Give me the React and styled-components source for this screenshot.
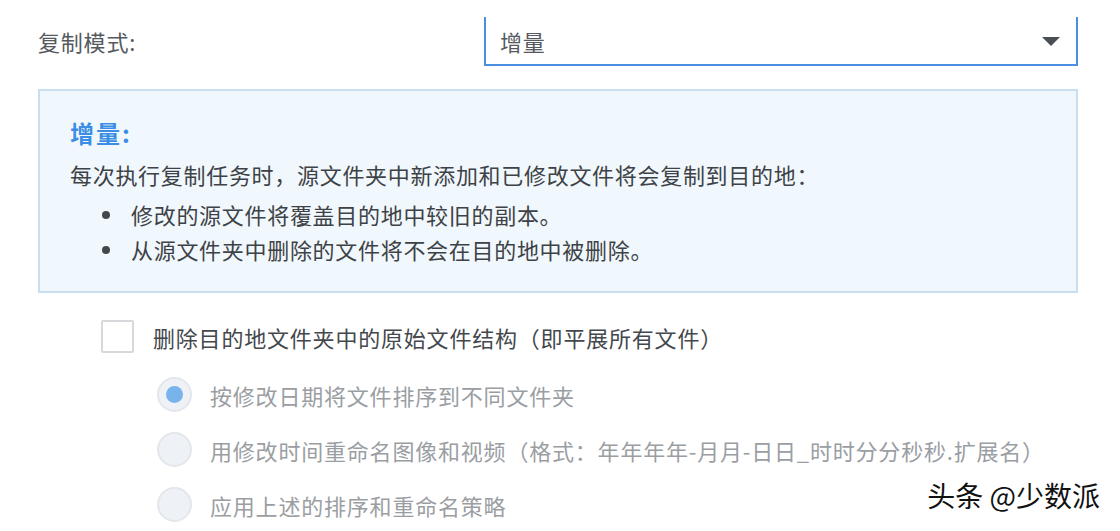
import React from "react";
import styled, { createGlobalStyle } from "styled-components";

const GlobalStyle = createGlobalStyle`
  html, body {
    margin: 0;
    padding: 0;
    background: #ffffff;
  }
  body {
    font-family: "Noto Sans CJK SC", "Noto Sans", sans-serif;
    width: 1120px;
    height: 531px;
    overflow: hidden;
  }
`;

const Page = styled.div`
  position: relative;
  width: 1120px;
  height: 531px;
  padding: 17px 42px 0 38px;
  box-sizing: border-box;
`;

const FormRow = styled.div`
  display: flex;
  align-items: center;
`;

const Label = styled.div`
  width: 446px;
  font-size: 22px;
  letter-spacing: 0.8px;
  color: #555a60;
  padding-bottom: 2px;
`;

const Select = styled.div`
  width: 594px;
  height: 49px;
  box-sizing: border-box;
  border: 2px solid #4a8fe0;
  border-top: none;
  display: flex;
  align-items: center;
  justify-content: space-between;
  padding: 0 16px 0 14px;
  font-size: 22px;
  letter-spacing: 0.8px;
  color: #555a60;
`;

const Caret = styled.span`
  width: 0;
  height: 0;
  border-left: 9px solid transparent;
  border-right: 9px solid transparent;
  border-top: 9px solid #4a4f56;
  margin-top: 2px;
`;

const InfoBox = styled.div`
  margin-top: 23px;
  width: 1040px;
  height: 204px;
  box-sizing: border-box;
  border: 2px solid #c8def1;
  background: #f1f8fd;
  padding: 24px 30px 0 30px;
  font-size: 22px;
  letter-spacing: 0.7px;
  color: #3e4246;
`;

const InfoTitle = styled.div`
  line-height: 35px;
  font-size: 24px;
  letter-spacing: 2px;
  font-weight: 700;
  color: #3b8ee3;
`;

const InfoText = styled.div`
  line-height: 35px;
  margin-top: 7px;
`;

const BulletList = styled.ul`
  list-style: none;
  margin: 5px 0 0 0;
  padding: 0;
`;

const Bullet = styled.li`
  position: relative;
  line-height: 35px;
  padding-left: 61px;
  &::before {
    content: "";
    position: absolute;
    left: 32px;
    top: 14px;
    width: 8px;
    height: 8px;
    border-radius: 50%;
    background: #44484c;
  }
`;

const OptionRow = styled.div`
  display: flex;
  align-items: center;
  height: 55px;
  margin-left: ${(p) => p.$indent}px;
  gap: ${(p) => p.$gap}px;
  font-size: 22px;
  letter-spacing: 0.8px;
  color: ${(p) => (p.$disabled ? "#9a9ea3" : "#44484d")};
`;

const CheckRow = styled(OptionRow)`
  margin-top: 16px;
  margin-bottom: 3px;
`;

const CheckBox = styled.span`
  width: 33px;
  height: 33px;
  box-sizing: border-box;
  border: 2px solid #d6d8db;
  border-radius: 2px;
  background: #fff;
`;

const Radio = styled.span`
  width: 35px;
  height: 35px;
  box-sizing: border-box;
  border-radius: 50%;
  border: 2px solid #e3e6ea;
  background: #eef1f5;
  display: flex;
  align-items: center;
  justify-content: center;
  &::after {
    content: "";
    display: ${(p) => (p.$checked ? "block" : "none")};
    width: 17px;
    height: 17px;
    border-radius: 50%;
    background: #78b3ec;
  }
`;

const Watermark = styled.div`
  position: absolute;
  right: 20px;
  bottom: 16px;
  font-size: 28px;
  font-weight: 400;
  color: #111;
  text-shadow: 1px 0 0 #fff, -1px 0 0 #fff, 0 1px 0 #fff, 0 -1px 0 #fff;
`;

const radios = [
  { label: "按修改日期将文件排序到不同文件夹", checked: true },
  {
    label: "用修改时间重命名图像和视频（格式：年年年年-月月-日日_时时分分秒秒.扩展名）",
    checked: false,
  },
  { label: "应用上述的排序和重命名策略", checked: false },
];

export default function App() {
  return (
    <>
      <GlobalStyle />
      <Page>
        <FormRow>
          <Label>复制模式:</Label>
          <Select>
            <span>增量</span>
            <Caret />
          </Select>
        </FormRow>
        <InfoBox>
          <InfoTitle>增量:</InfoTitle>
          <InfoText>每次执行复制任务时，源文件夹中新添加和已修改文件将会复制到目的地：</InfoText>
          <BulletList>
            <Bullet>修改的源文件将覆盖目的地中较旧的副本。</Bullet>
            <Bullet>从源文件夹中删除的文件将不会在目的地中被删除。</Bullet>
          </BulletList>
        </InfoBox>
        <CheckRow $indent={63} $gap={19}>
          <CheckBox />
          <span>删除目的地文件夹中的原始文件结构（即平展所有文件）</span>
        </CheckRow>
        {radios.map((r) => (
          <OptionRow key={r.label} $indent={119} $gap={18} $disabled>
            <Radio $checked={r.checked} />
            <span>{r.label}</span>
          </OptionRow>
        ))}
        <Watermark>头条 @少数派</Watermark>
      </Page>
    </>
  );
}
